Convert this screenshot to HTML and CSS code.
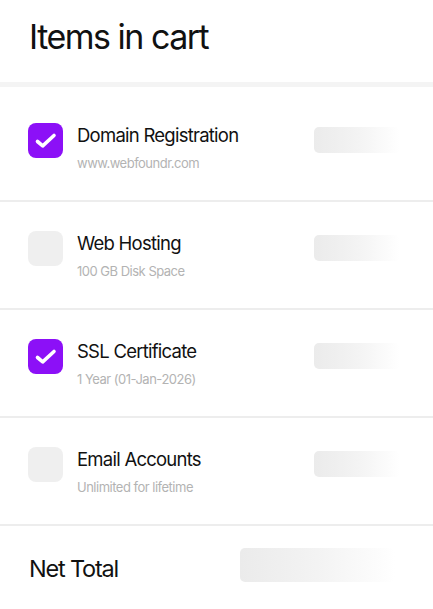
FILE: index.html
```html
<!DOCTYPE html>
<html lang="en">
<head>
<meta charset="utf-8">
<title>Items in cart</title>
<link rel="stylesheet" href="styles.css">
</head>
<body>
<div class="cart">
  <header class="cart-header">
    <h1 class="cart-title">Items in cart</h1>
  </header>
  <ul class="cart-list">
    <li class="cart-item">
      <span class="check is-checked">
        <svg viewBox="0 0 35 35" width="35" height="35"><path d="M9.5 18.5 L14.7 22.8 L26 12.5" fill="none" stroke="#fff" stroke-width="3.6" stroke-linecap="round" stroke-linejoin="round"/></svg>
      </span>
      <div class="item-text">
        <div class="item-name">Domain Registration</div>
        <div class="item-desc">www.webfoundr.com</div>
      </div>
      <span class="price-skeleton"></span>
    </li>
    <li class="cart-item">
      <span class="check"></span>
      <div class="item-text">
        <div class="item-name">Web Hosting</div>
        <div class="item-desc">100 GB Disk Space</div>
      </div>
      <span class="price-skeleton"></span>
    </li>
    <li class="cart-item">
      <span class="check is-checked">
        <svg viewBox="0 0 35 35" width="35" height="35"><path d="M9.5 18.5 L14.7 22.8 L26 12.5" fill="none" stroke="#fff" stroke-width="3.6" stroke-linecap="round" stroke-linejoin="round"/></svg>
      </span>
      <div class="item-text">
        <div class="item-name">SSL Certificate</div>
        <div class="item-desc">1 Year (01-Jan-2026)</div>
      </div>
      <span class="price-skeleton"></span>
    </li>
    <li class="cart-item">
      <span class="check"></span>
      <div class="item-text">
        <div class="item-name">Email Accounts</div>
        <div class="item-desc">Unlimited for lifetime</div>
      </div>
      <span class="price-skeleton"></span>
    </li>
  </ul>
  <footer class="cart-total">
    <span class="total-label">Net Total</span>
    <span class="total-skeleton"></span>
  </footer>
</div>
</body>
</html>
```
FILE: styles.css
```css
* { box-sizing: border-box; }
html, body { margin: 0; padding: 0; background: #fff; }
body {
  font-family: Inter, "Noto Sans", "DejaVu Sans", sans-serif;
  color: #111;
  overflow: hidden;
}
.cart { width: 433px; }
.cart-header {
  height: 87px;
  padding: 15px 0 0 29px;
  border-bottom: 5px solid #f4f4f4;
}
.cart-title {
  margin: 0;
  font-size: 34px;
  font-weight: 400;
  line-height: 44px;
  letter-spacing: -1.5px;
}
.cart-list {
  list-style: none;
  margin: 0;
  padding: 7px 0 0 0;
}
.cart-item {
  display: flex;
  align-items: flex-start;
  height: 108px;
  padding: 29px 33px 0 28px;
  border-bottom: 2px solid #ededed;
}
.check {
  flex: none;
  width: 35px;
  height: 35px;
  border-radius: 8px;
  background: #efefef;
  display: block;
}
.check svg { display: block; }
.check.is-checked { background: #8c10f7; }
.item-text {
  flex: 1;
  margin-left: 14px;
}
.item-name {
  font-size: 18.5px;
  line-height: 24px;
  letter-spacing: -0.75px;
  color: #111;
}
.item-desc {
  margin-top: 8px;
  font-size: 13px;
  line-height: 17px;
  letter-spacing: -0.5px;
  color: #b3b3b3;
}
.price-skeleton {
  flex: none;
  margin-top: 4px;
  width: 86px;
  height: 26px;
  border-radius: 5px;
  background: linear-gradient(to right, #ebebeb 0%, #f3f3f3 50%, #ffffff 100%);
}
.cart-total {
  display: flex;
  align-items: flex-start;
  padding: 22px 38px 0 29px;
  justify-content: space-between;
}
.total-label {
  padding-top: 4px;
  font-size: 23.5px;
  line-height: 34px;
  letter-spacing: -1.2px;
  color: #111;
}
.total-skeleton {
  width: 155px;
  height: 34px;
  border-radius: 5px;
  background: linear-gradient(to right, #ebebeb 0%, #f3f3f3 50%, #ffffff 100%);
}
```
